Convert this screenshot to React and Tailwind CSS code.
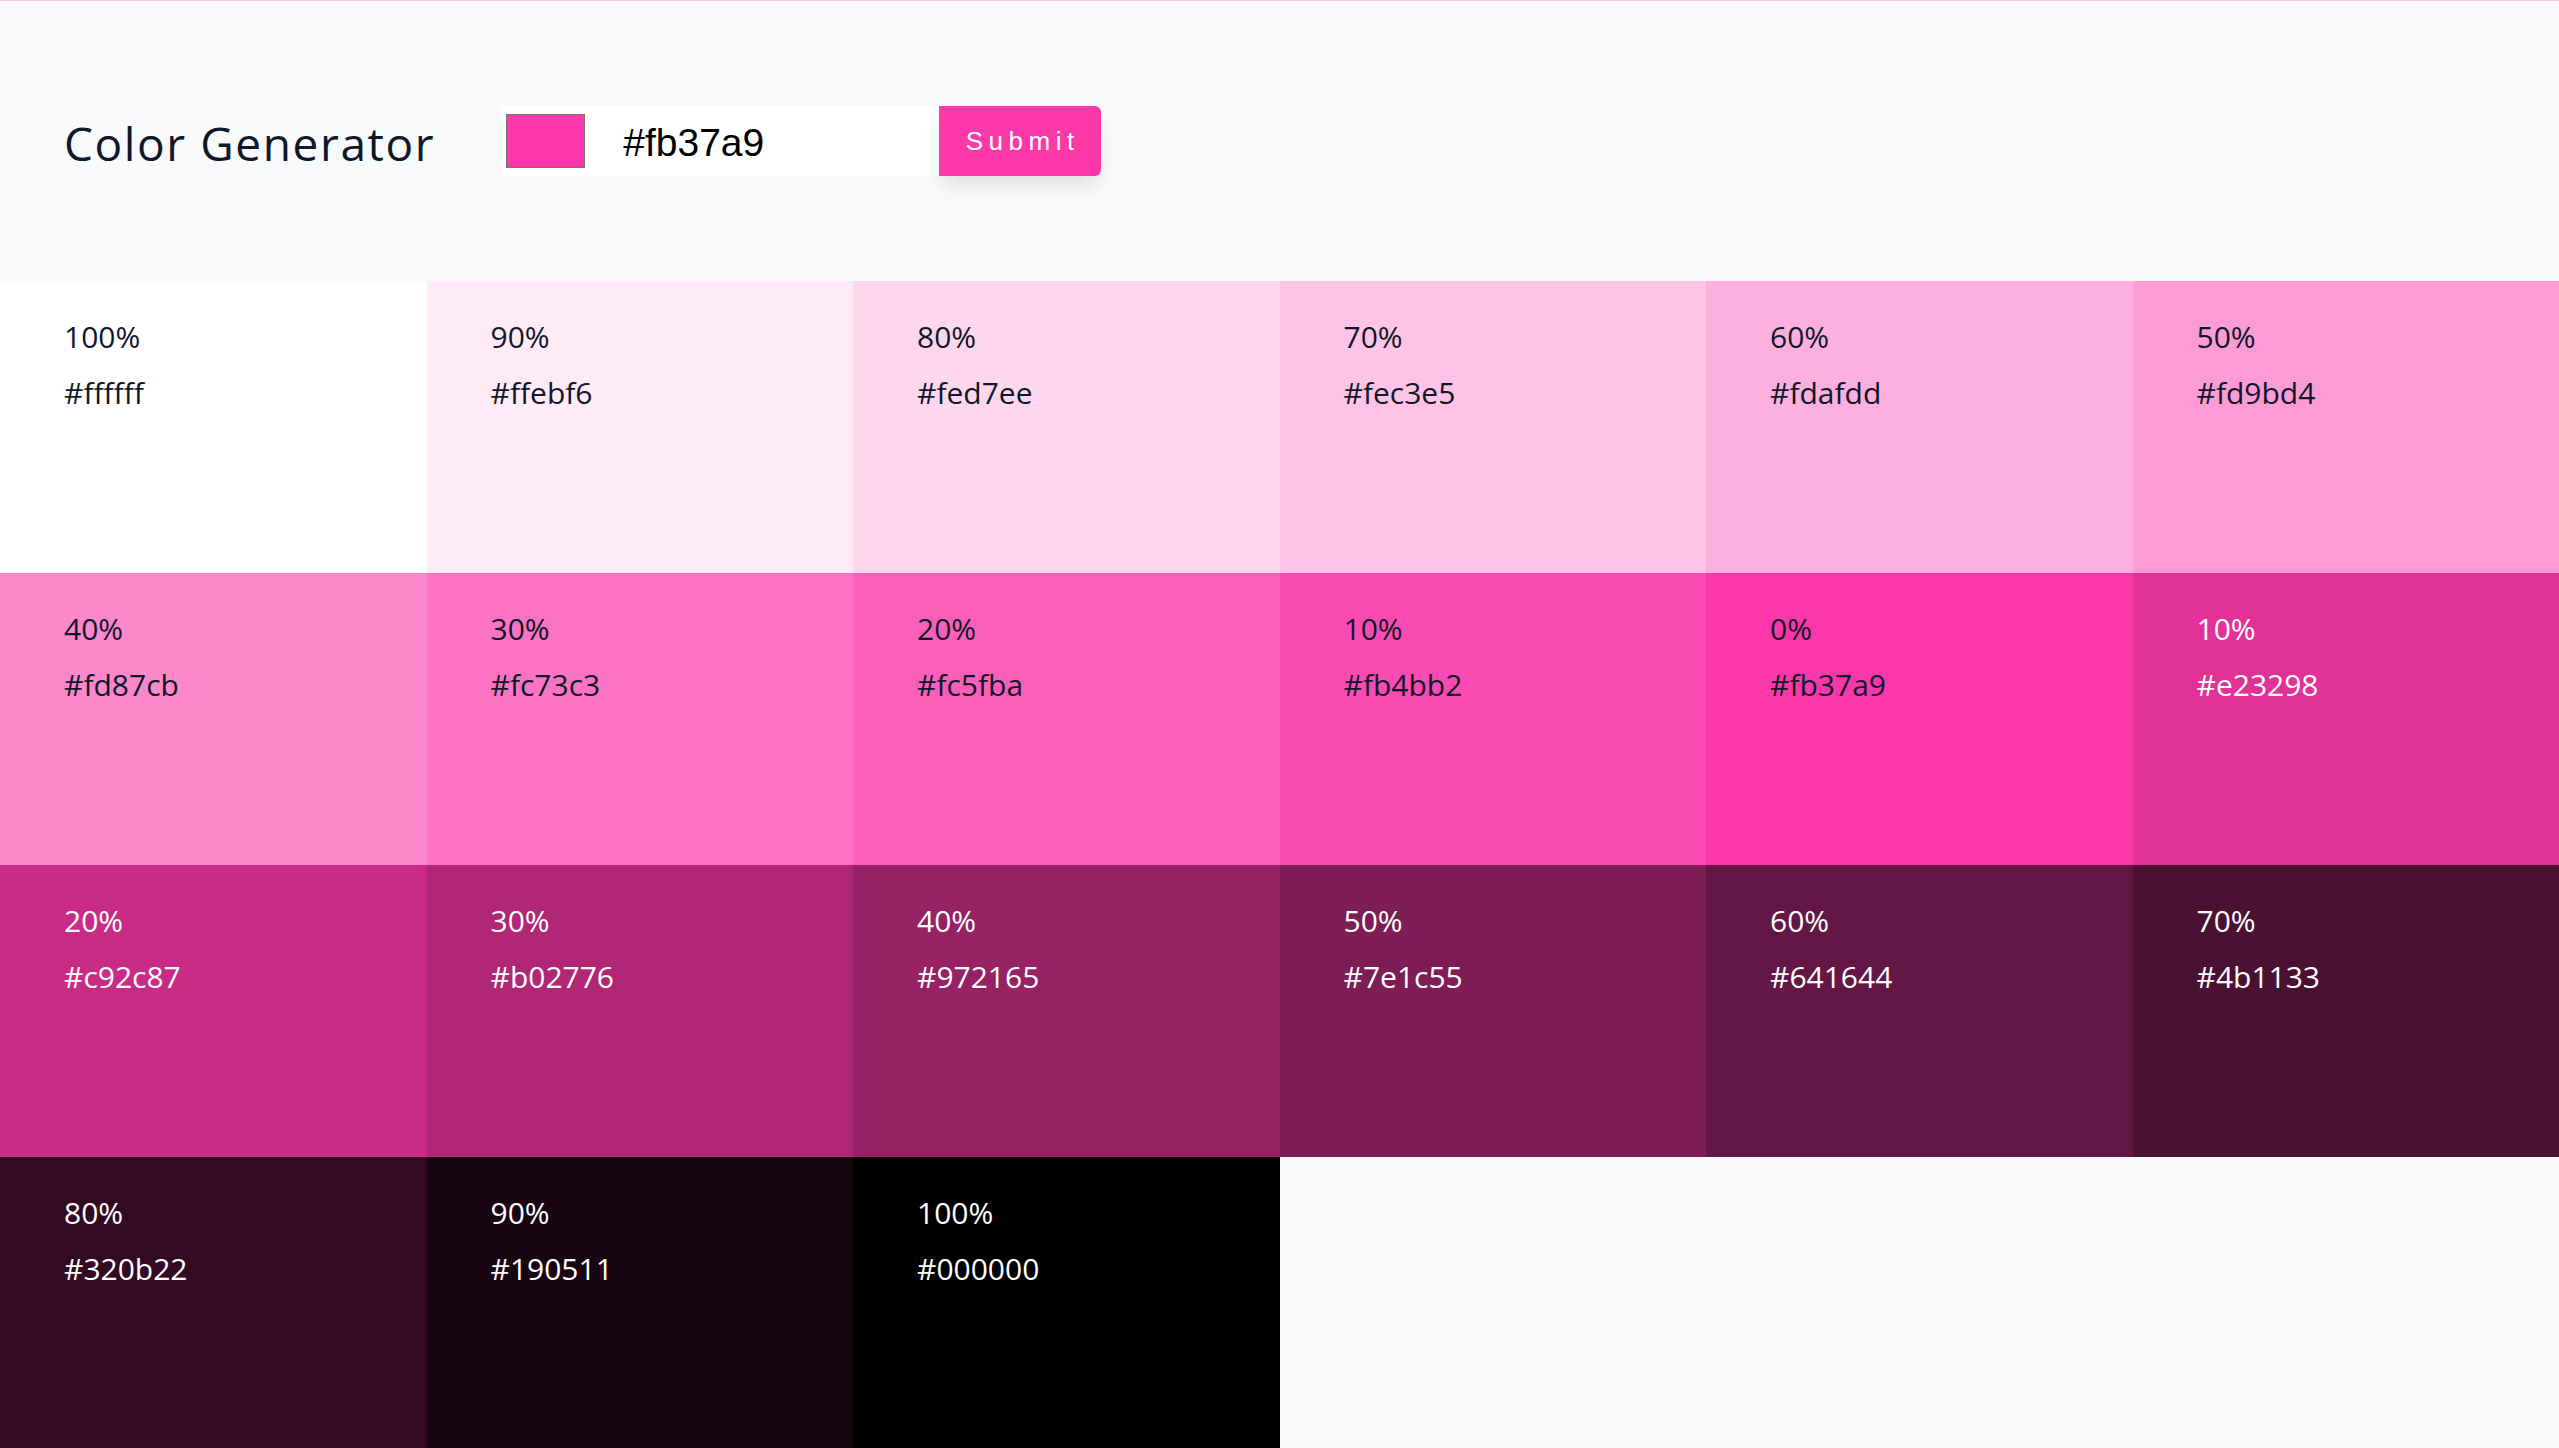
import React, { useState } from 'react';

const tints = [
  ['100%', '#ffffff'],
  ['90%', '#ffebf6'],
  ['80%', '#fed7ee'],
  ['70%', '#fec3e5'],
  ['60%', '#fdafdd'],
  ['50%', '#fd9bd4'],
  ['40%', '#fd87cb'],
  ['30%', '#fc73c3'],
  ['20%', '#fc5fba'],
  ['10%', '#fb4bb2'],
  ['0%', '#fb37a9'],
];

const shades = [
  ['10%', '#e23298'],
  ['20%', '#c92c87'],
  ['30%', '#b02776'],
  ['40%', '#972165'],
  ['50%', '#7e1c55'],
  ['60%', '#641644'],
  ['70%', '#4b1133'],
  ['80%', '#320b22'],
  ['90%', '#190511'],
  ['100%', '#000000'],
];

const ColorCell = ({ weight, hex, light }) => (
  <div
    className={`h-[292px] pl-[64px] pt-[28px] text-[30px] leading-[56px] ${light ? 'text-white' : 'text-[#0f172a]'}`}
    style={{ backgroundColor: hex }}
  >
    <p>{weight}</p>
    <p>{hex}</p>
  </div>
);

const App = () => {
  const [color, setColor] = useState('#fb37a9');

  return (
    <div className="min-h-screen bg-[#f8f9fb] font-['Segoe_UI','Open_Sans',sans-serif]">
      <div className="h-px bg-[#f2c4df]"></div>
      {/* header with the form */}
      <section className="flex h-[280px] items-center pl-[64px]">
        <h3 className="mt-[5px] text-[46px] tracking-[1.6px] text-[#0f172a]">Color Generator</h3>
        <form onSubmit={(e) => e.preventDefault()} className="ml-[66px] flex h-[70px]">
          <div className="flex w-[438px] items-center bg-white pl-[5px]">
            <div className="h-[54px] w-[79px] border border-[#767676] bg-[#fb37a9]"></div>
            <input
              type="text"
              value={color}
              onChange={(e) => setColor(e.target.value)}
              className="ml-[38px] mt-[4px] w-[300px] bg-transparent font-['Liberation_Sans',Arial,sans-serif] text-[39px] text-black outline-none"
            />
          </div>
          <button
            type="submit"
            className="w-[162px] rounded-r-md bg-[#fd38a9] pl-[5px] font-['Liberation_Sans',Arial,sans-serif] text-[26px] tracking-[5.5px] text-white shadow-[0_12px_20px_-4px_rgba(0,0,0,0.12)]"
          >
            Submit
          </button>
        </form>
      </section>
      <section className="grid grid-cols-6">
        {tints.map(([w, hex]) => (
          <ColorCell key={'t' + w} weight={w} hex={hex} />
        ))}
        {shades.map(([w, hex]) => (
          <ColorCell key={'s' + w} weight={w} hex={hex} light />
        ))}
      </section>
    </div>
  );
};

export default App;
